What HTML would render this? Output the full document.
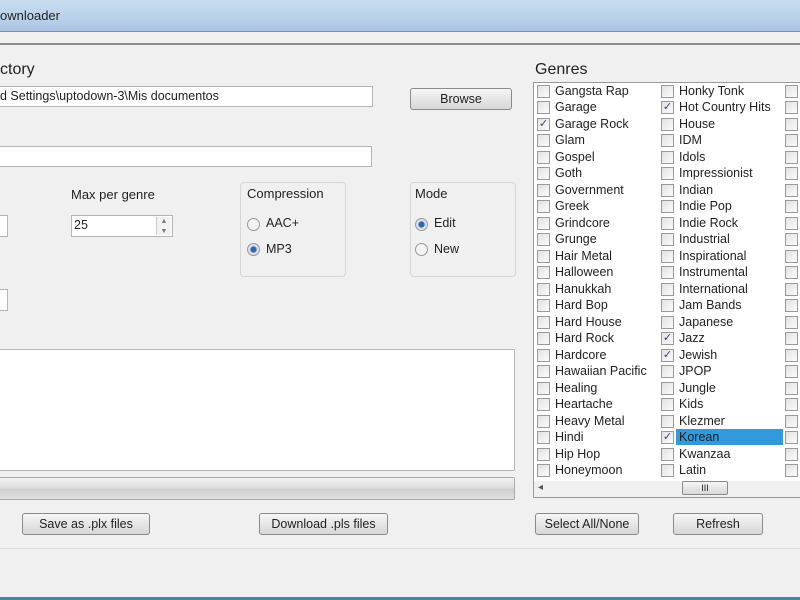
<!DOCTYPE html><html><head><style>
body{margin:0;width:800px;height:600px;overflow:hidden;background:#f0f0f0;font-family:"Liberation Sans",sans-serif;font-size:12.5px;color:#222;position:relative}
.a{position:absolute}
.in{position:absolute;background:#fff;border:1px solid #b5b5b5;box-sizing:border-box}
.btn{position:absolute;box-sizing:border-box;border:1px solid #8a8a8a;border-radius:3px;background:linear-gradient(#f6f6f6,#e6e6e6 50%,#d8d8d8);text-align:center;font-size:12.5px;line-height:20px}
.gb{position:absolute;border:1px solid #d6d6d6;border-radius:4px;box-sizing:border-box}
.cb{position:absolute;width:11px;height:11px;border:1px solid #9a9a9a;background:linear-gradient(135deg,#e2e2e2,#fbfbfb);font-size:11px;line-height:11px;text-align:center;color:#3a3f7a}
.t{position:absolute;font-size:12.5px;line-height:15px;white-space:nowrap}
.rad{position:absolute;width:11px;height:11px;border:1px solid #999;border-radius:50%;background:#f3f3f3}
.sp{position:absolute;width:14px;border-left:1px solid #ccc;right:1px;top:1px;bottom:1px;background:#f2f2f2}
</style></head><body>
<div class="a" style="left:0;top:0;width:800px;height:31px;background:linear-gradient(#c9dcee,#b9d1ea 60%,#a9c5e3);border-bottom:1px solid #7a93b0"></div>
<div class="t" style="left:0;top:8px;font-size:13px">ownloader</div>
<div class="a" style="left:0;top:43px;width:800px;height:2px;background:#8a8a8a"></div>
<div class="t" style="left:0;top:61px;font-size:16px;line-height:18px">ctory</div>
<div class="in" style="left:-2px;top:86px;width:375px;height:21px"></div>
<div class="t" style="left:0;top:89px">d Settings\uptodown-3\Mis documentos</div>
<div class="btn" style="left:410px;top:88px;width:102px;height:22px">Browse</div>
<div class="in" style="left:-2px;top:146px;width:374px;height:21px"></div>
<div class="in" style="left:-2px;top:215px;width:10px;height:22px"></div>
<div class="t" style="left:71px;top:187px;font-size:13px">Max per genre</div>
<div class="in" style="left:71px;top:215px;width:102px;height:22px"><div class="sp"><div style="font-size:7px;color:#777;text-align:center;line-height:10px">▲<br>▼</div></div></div>
<div class="t" style="left:74px;top:218px">25</div>
<div class="gb" style="left:240px;top:182px;width:106px;height:95px"></div>
<div class="t" style="left:247px;top:186px;font-size:13px">Compression</div>
<div class="rad" style="left:247px;top:218px"></div><div class="t" style="left:266px;top:216px">AAC+</div>
<div class="rad" style="left:247px;top:243px;background:radial-gradient(#2a6aa8 35%,#dde 45%)"></div><div class="t" style="left:266px;top:242px">MP3</div>
<div class="gb" style="left:410px;top:182px;width:106px;height:95px"></div>
<div class="t" style="left:415px;top:186px;font-size:13px">Mode</div>
<div class="rad" style="left:415px;top:218px;background:radial-gradient(#2a6aa8 35%,#dde 45%)"></div><div class="t" style="left:434px;top:216px">Edit</div>
<div class="rad" style="left:415px;top:243px"></div><div class="t" style="left:434px;top:242px">New</div>
<div class="in" style="left:-2px;top:289px;width:10px;height:22px"></div>
<div class="in" style="left:-2px;top:349px;width:517px;height:122px"></div>
<div class="a" style="left:-2px;top:477px;width:517px;height:23px;border:1px solid #aaa;box-sizing:border-box;border-radius:2px;background:linear-gradient(#f2f2f2,#dedede 45%,#cfcfcf 55%,#e0e0e0)"></div>
<div class="t" style="left:535px;top:61px;font-size:16px;line-height:18px">Genres</div>
<div class="in" style="left:533px;top:82px;width:280px;height:416px;border-color:#999"></div>
<div class="a" style="left:534px;top:481px;width:266px;height:16px;background:#f0f0f0"></div>
<div class="t" style="left:538px;top:480px;font-size:10px;color:#555">◂</div>
<div class="btn" style="left:682px;top:481px;width:46px;height:14px;line-height:12px;font-size:9px;border-radius:2px">III</div>
<div id="g"></div>
<div class="btn" style="left:22px;top:513px;width:128px;height:22px">Save as .plx files</div>
<div class="btn" style="left:259px;top:513px;width:129px;height:22px">Download .pls files</div>
<div class="btn" style="left:535px;top:513px;width:104px;height:22px">Select All/None</div>
<div class="btn" style="left:673px;top:513px;width:90px;height:22px">Refresh</div>
<div class="a" style="left:0;top:548px;width:800px;height:1px;background:#dcdcdc"></div>
<div class="a" style="left:0;top:597px;width:800px;height:3px;background:#3a8ea0"></div>
<script>
var c1=["Gangsta Rap","Garage","Garage Rock","Glam","Gospel","Goth","Government","Greek","Grindcore","Grunge","Hair Metal","Halloween","Hanukkah","Hard Bop","Hard House","Hard Rock","Hardcore","Hawaiian Pacific","Healing","Heartache","Heavy Metal","Hindi","Hip Hop","Honeymoon"];
var c2=["Honky Tonk","Hot Country Hits","House","IDM","Idols","Impressionist","Indian","Indie Pop","Indie Rock","Industrial","Inspirational","Instrumental","International","Jam Bands","Japanese","Jazz","Jewish","JPOP","Jungle","Kids","Klezmer","Korean","Kwanzaa","Latin"];
var ch1={2:1},ch2={1:1,15:1,16:1,21:1},h="";
for(var i=0;i<24;i++){var y=85+i*16.48;
h+='<div class="cb" style="left:537px;top:'+y+'px">'+(ch1[i]?'✓':'')+'</div><div class="t" style="left:555px;top:'+(y-1)+'px">'+c1[i]+'</div>';
if(i==21)h+='<div class="a" style="left:676px;top:'+(y-2)+'px;width:107px;height:16px;background:#3399dd"></div>';
h+='<div class="cb" style="left:661px;top:'+y+'px">'+(ch2[i]?'✓':'')+'</div><div class="t" style="left:679px;top:'+(y-1)+'px">'+c2[i]+'</div>';
h+='<div class="cb" style="left:785px;top:'+y+'px"></div>';}
document.getElementById('g').innerHTML=h;
</script>
</body></html>
